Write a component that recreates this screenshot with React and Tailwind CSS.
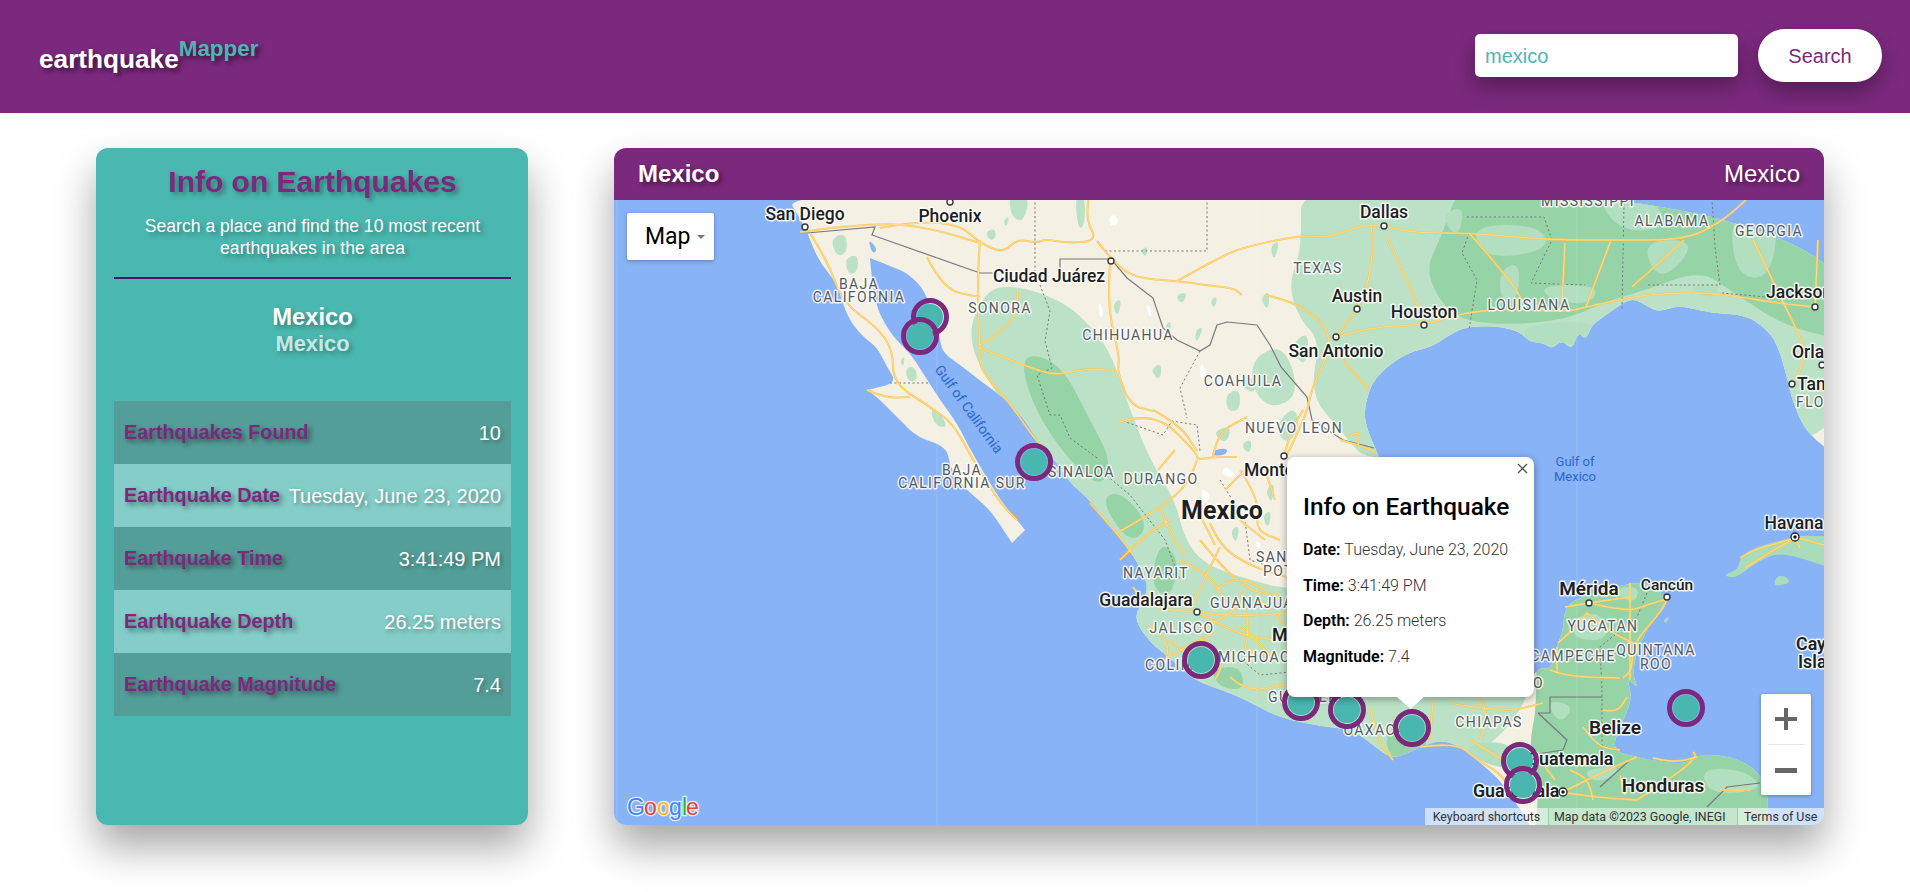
const LAND = "780,185 1860,185 1860,470 1808,437 1792,400 1787,377 1777,343 1765,328 1746,315 1710,313 1678,305 1660,312 1648,307 1632,297 1610,312 1596,322 1591,327 1586,340 1578,332 1572,350 1562,340 1552,349 1544,343 1530,342 1520,332 1503,327 1482,326 1462,328 1445,338 1431,347 1410,352 1389,365 1376,378 1369,390 1363,417 1374,447 1400,500 1420,560 1440,620 1480,660 1533,677 1540,667 1550,670 1556,650 1558,643 1563,630 1565,607 1580,597 1630,583 1647,583 1667,597 1665,608 1653,620 1643,637 1635,657 1633,677 1638,687 1632,683 1627,678 1632,697 1625,717 1610,750 1637,757 1650,760 1683,765 1697,755 1720,755 1740,760 1760,773 1770,800 1763,850 1540,850 1525,815 1513,800 1500,780 1477,760 1457,745 1440,740 1420,747 1393,760 1373,745 1353,730 1320,726 1290,720 1270,713 1250,702 1230,693 1193,680 1173,660 1150,643 1133,617 1145,600 1148,582 1133,555 1117,533 1090,500 1070,483 1057,463 1037,440 1027,423 1007,400 983,383 963,367 943,353 940,340 938,330 930,305 922,287 907,273 893,267 870,258 870,258 872,280 877,310 893,337 910,353 923,373 940,400 957,423 972,453 1000,500 1017,520 1025,530 1025,530 1012,543 1012,543 997,520 987,507 963,487 950,467 947,447 917,437 903,423 887,407 877,397 867,390 867,390 897,383 887,367 877,347 863,337 847,317 837,283 820,263 810,240 805,227";
const CUBA = "1723,575 1738,570 1740,558 1752,548 1790,538 1803,535 1850,538 1850,575 1802,558 1777,553 1757,562 1743,573 1733,578";

const LIGHT = [
  "1300,170 1302,250 1288,285 1300,320 1320,340 1310,395 1340,430 1374,470 1880,470 1880,170",
  "985,290 1015,285 1060,300 1085,320 1110,350 1130,410 1150,460 1175,500 1185,540 1205,565 1250,580 1290,590 1533,600 1533,720 1400,800 1100,730 1070,560 1060,480 1000,400 965,340",
  "1075,195 1085,195 1085,225 1078,230",
  "845,258 858,254 858,272 848,275",
  "830,240 845,232 848,250 838,258",
  "905,368 915,366 918,380 908,382",
  "930,408 940,412 948,428 935,426",
  "985,232 995,228 996,238 990,241",
  "1008,195 1030,195 1024,222 1012,218",
  "1175,295 1188,292 1182,305",
  "1195,330 1204,326 1196,345",
  "1255,355 1285,345 1300,395 1270,410 1250,385",
  "1225,395 1240,388 1240,410 1228,412",
  "1290,345 1310,330 1305,370",
  "1270,246 1280,240 1274,262",
  "1212,432 1232,425 1226,445",
  "1240,385 1255,375 1255,395",
  "1150,370 1162,362 1160,382",
  "1275,425 1295,405 1300,430 1285,445",
  "1290,280 1298,262 1302,290",
  "1260,298 1270,290 1268,312",
  "1112,305 1122,297 1118,318",
  "1165,325 1172,320 1168,340",
  "1140,250 1148,246 1146,258",
  "1210,300 1218,296 1214,310",
  "1240,445 1252,438 1250,455",
  "1265,490 1275,482 1272,505",
  "1230,530 1240,525 1236,545",
  "1195,500 1203,495 1200,512",
  "1110,438 1120,432 1116,448",
  "1262,515 1272,510 1268,530",
  "1003,220 1010,216 1006,228",
  "900,360 905,356 903,368",
];
const DARK = [
  "1465,170 1440,240 1425,270 1445,310 1480,325 1560,322 1610,300 1640,292 1700,270 1730,290 1790,330 1880,345 1880,170",
  "1534,575 1534,575 1720,575 1720,575 1720,850 1720,850 1532,850 1532,850 1540,790 1528,750 1538,700",
  "1640,750 1640,750 1790,750 1790,750 1790,850 1790,850 1640,850 1640,850",
  "1380,735 1420,715 1430,760 1400,770",
  "1020,352 1060,362 1090,420 1112,462 1100,490 1060,450 1030,400",
  "1100,500 1120,490 1150,525 1130,545",
  "1160,540 1180,560 1170,600 1150,585",
  "1300,650 1340,660 1330,700 1300,695",
  "1210,670 1240,665 1245,690 1220,688",
];
const DARKLIGHT = [
  "1595,195 1650,195 1670,228 1620,232",
  "1470,225 1540,225 1550,250 1485,260",
  "1730,210 1780,215 1770,280 1735,275",
  "1540,285 1600,285 1590,305 1550,300",
  "1640,240 1700,240 1660,285",
  "1700,768 1745,770 1765,790 1710,795",
  "1580,770 1625,765 1600,785",
  "1460,745 1510,740 1520,770 1485,765",
  "1570,620 1600,610 1610,640 1575,640",
  "1520,325 1600,320 1585,345 1530,345",
  "1440,215 1465,205 1458,240",
  "1500,270 1520,262 1518,300 1500,300",
  "1685,290 1715,280 1720,300",
  "1610,590 1640,585 1635,605",
  "1545,700 1575,705 1560,725",
];
const WHITE = ["1109,216 1117,215 1118,225 1110,226", "1098,300 1104,312 1100,320", "1145,302 1152,310 1150,320", "1096,268 1102,278 1094,282", "1200,487 1212,495 1204,505", "1224,465 1240,478 1222,476", "1255,540 1262,545 1258,550", "1200,360 1208,375 1200,380"];

const ROADS = [
  "880,228 920,221 960,225 980,243 1003,253 1017,239 1037,243 1045,239 1067,243 1097,241 1087,221 1088,200",
  "1097,241 1110,258 1133,278 1177,281 1213,286 1233,288 1242,295",
  "1177,281 1213,261 1240,248 1301,235 1327,238 1363,225 1384,226 1415,233 1472,233 1549,240 1616,240 1684,240 1720,223 1746,200",
  "1371,226 1374,247 1365,300 1336,337", "1387,237 1410,287 1425,325",
  "1336,337 1369,327 1425,325 1462,313 1513,308 1565,312 1586,307 1632,297 1668,293 1715,293 1777,303 1815,307",
  "1265,295 1299,302 1336,337 1312,387 1307,413 1286,457", "1343,360 1369,390",
  "1469,233 1508,277 1524,303", "1565,243 1562,303", "1611,240 1586,307", "1684,240 1632,287", "1753,240 1787,310 1808,353 1792,387", "1818,240 1815,307",
  "810,233 827,260 843,303 877,327 893,350 893,383 930,407 953,423 973,460 1000,503 1017,520", "867,390 885,398 910,397",
  "980,240 977,280 980,350 980,370 1010,403 1033,437 1050,455", "1090,503 1117,533 1133,555",
  "927,257 943,290 980,297", "800,232 875,222 930,228 980,243", "980,348 1037,371 1060,375 1087,368 1117,371",
  "1110,265 1107,305 1120,358 1117,371 1130,405 1153,411", "980,345 1015,325 1018,290",
  "1153,410 1180,425 1197,451", "1117,423 1153,410 1197,453 1197,460 1213,457 1237,457",
  "1197,460 1190,483 1160,508 1117,533", "1160,508 1170,533 1185,555", "1210,523 1220,547 1253,567 1287,577", "1220,547 1190,607 1197,612",
  "1197,612 1150,610 1133,587", "1197,612 1233,617 1287,613", "1197,612 1233,633 1273,640", "1167,657 1213,633", "1230,677 1247,693 1290,683",
  "1284,456 1290,433 1303,410", "1213,457 1217,433 1247,417", "1240,470 1260,500 1255,530 1280,540", "1340,440 1356,444 1375,452",
  "1350,436 1360,430 1358,445", "1200,540 1240,590 1280,595", "1210,625 1250,600", "1240,625 1275,660", "1170,640 1190,660 1230,660",
  "1370,707 1377,740 1393,760", "1433,700 1430,740", "1450,703 1503,713 1543,703", "1470,740 1503,760",
  "1420,747 1457,742 1477,760 1500,773 1513,793 1563,792 1593,797 1637,800", "1563,792 1607,770 1637,757", "1593,800 1590,780 1570,770",
  "1637,800 1673,777 1697,757 1693,752", "1653,758 1673,763 1697,757", "1583,727 1597,747 1620,750", "1603,710 1617,713 1627,697",
  "1565,607 1589,603 1630,597", "1589,603 1627,612 1647,605 1667,599", "1630,583 1630,680", "1667,599 1663,610 1633,643 1632,670 1623,678",
  "1587,613 1607,630 1633,643", "1550,670 1557,673 1580,677 1620,678", "1557,647 1557,673", "1558,643 1570,633 1587,613",
  "1740,558 1752,550 1790,540 1795,537 1824,545", "1745,568 1770,552 1792,540", "1795,537 1800,548",
  "1180,560 1210,575 1225,600", "1240,590 1250,620 1245,650", "1150,625 1170,640 1165,665", "1215,590 1235,575 1265,590", "1260,600 1285,625",
  "1205,640 1225,660 1215,680", "1250,650 1280,660", "1120,560 1145,535 1170,520", "1240,520 1265,540", "1225,490 1245,470", "1275,500 1265,470",
  "1200,515 1215,545", "1158,470 1175,450", "1330,690 1345,725", "1470,690 1490,705 1480,740", "1540,760 1555,780", "1620,775 1625,795", "1720,790 1750,790",
];
const STATES = [
  "1035,198 1035,271", "1040,285 1050,311 1045,341 1052,368 1037,375 1050,415 1060,415 1070,438 1097,458", "1105,251 1207,251 1207,198",
  "1200,351 1180,388 1187,418", "1123,421 1163,435 1172,421 1197,425 1200,451", "890,383 930,383",
  "1469,233 1462,253 1477,280 1469,330", "1467,217 1544,217 1552,240 1531,283 1585,285", "1624,203 1622,310", "1648,285 1720,285 1715,247 1712,200", "1722,293 1766,297",
  "1647,593 1637,617 1600,647 1602,690", "1602,690 1602,750", "1100,470 1130,495 1165,540 1180,580", "1220,480 1245,520 1250,560 1280,570", "1230,650 1260,675 1290,672",
];
const BORDERS = [
  "807,233 875,227 872,235 980,273 993,273",
  "1060,268 1060,259 1111,259 1127,278 1153,298 1163,328 1177,340 1200,351 1210,345 1217,325 1227,322 1257,325 1270,345 1281,367 1307,397 1312,420 1343,440 1374,448",
  "1538,713 1567,740 1563,750 1530,755", "1538,713 1550,713 1550,697 1602,697", "1600,787 1630,760", "1760,783 1727,787 1707,807",
];
const LAKES = ["1213,450 1228,448 1226,455 1212,456", "868,238 878,250 872,254", "1518,600 1525,598 1522,604", "1290,638 1298,638 1296,644"];

const LABELS = [
  ["San Diego", 805, 220, "c"], ["Phoenix", 950, 222, "c"], ["Ciudad Juárez", 1049, 282, "c"], ["Dallas", 1384, 218, "c"], ["Austin", 1357, 302, "c"],
  ["Houston", 1424, 318, "c"], ["San Antonio", 1336, 357, "c"], ["Jacksonville", 1766, 298, "cs"], ["Orlando", 1792, 358, "cs"], ["Tampa", 1797, 390, "cs"],
  ["Monterrey", 1244, 476, "cs"], ["Guadalajara", 1146, 606, "c"], ["Mexico City", 1272, 641, "bs"], ["Mérida", 1589, 595, "b"], ["Cancún", 1667, 590, "cm"],
  ["Havana", 1794, 529, "c"], ["Cayman", 1796, 650, "bs"], ["Islands", 1798, 668, "bs"], ["Belize", 1615, 734, "b"], ["Honduras", 1663, 792, "b"],
  ["Guatemala", 1527, 765, "bs"], ["Guatemala", 1473, 797, "bs"], ["Mexico", 1222, 519, "x"],
  ["BAJA", 859, 289, "s"], ["CALIFORNIA", 859, 302, "s"], ["SONORA", 1000, 313, "s"], ["CHIHUAHUA", 1128, 340, "s"], ["COAHUILA", 1243, 386, "s"],
  ["TEXAS", 1318, 273, "s"], ["LOUISIANA", 1529, 310, "s"], ["MISSISSIPPI", 1588, 206, "s"], ["ALABAMA", 1672, 226, "s"], ["GEORGIA", 1769, 236, "s"],
  ["FLORIDA", 1796, 407, "ss"], ["NUEVO LEON", 1294, 433, "s"], ["DURANGO", 1161, 484, "s"], ["SINALOA", 1048, 477, "ss"], ["NAYARIT", 1156, 578, "s"],
  ["JALISCO", 1182, 633, "s"], ["GUANAJUATO", 1210, 608, "ss"], ["SAN LUIS", 1256, 562, "ss"], ["POTOSI", 1263, 576, "ss"], ["MICHOACAN", 1218, 662, "ss"],
  ["COLIMA", 1145, 670, "ss"], ["GUERRERO", 1268, 702, "ss"], ["BAJA", 962, 475, "s"], ["CALIFORNIA SUR", 962, 488, "s"], ["CHIAPAS", 1489, 727, "s"],
  ["OAXACA", 1375, 735, "s"], ["YUCATAN", 1603, 631, "s"], ["CAMPECHE", 1573, 661, "s"], ["QUINTANA", 1656, 655, "s"], ["ROO", 1656, 669, "s"], ["TABASCO", 1544, 688, "se"],
];
const DOTS = [[805, 227], [950, 202], [1111, 261], [1384, 226], [1357, 309], [1424, 325], [1336, 337], [1815, 307], [1822, 365], [1792, 384], [1284, 456], [1197, 612], [1589, 603], [1667, 597]];
const CAPITALS = [[1795, 537], [1563, 792]];
const MARKERS = [[930, 317], [920, 336], [1034, 462], [1201, 660], [1301, 702], [1347, 710], [1412, 728], [1520, 761], [1523, 785], [1686, 708]];
const ROWS = [
  ["Earthquakes Found", "10", "bg-[#549e99]"],
  ["Earthquake Date", "Tuesday, June 23, 2020", "bg-[#84cdc8]"],
  ["Earthquake Time", "3:41:49 PM", "bg-[#549e99]"],
  ["Earthquake Depth", "26.25 meters", "bg-[#84cdc8]"],
  ["Earthquake Magnitude", "7.4", "bg-[#549e99]"],
];
const POPUP = [["Date:", "Tuesday, June 23, 2020"], ["Time:", "3:41:49 PM"], ["Depth:", "26.25 meters"], ["Magnitude:", "7.4"]];

const parse = (s) => s.trim().split(/\s+/).map((p) => p.split(",").map(Number));
const mid = (a, b) => `${(a[0] + b[0]) / 2},${(a[1] + b[1]) / 2}`;
function closed(s) {
  const p = parse(s);
  let d = `M${mid(p[p.length - 1], p[0])}`;
  p.forEach((q, i) => { d += `Q${q[0]},${q[1]} ${mid(q, p[(i + 1) % p.length])}`; });
  return d + "Z";
}
function open(s) {
  const p = parse(s);
  let d = `M${p[0][0]},${p[0][1]}`;
  for (let i = 1; i < p.length - 1; i++) d += `Q${p[i][0]},${p[i][1]} ${mid(p[i], p[i + 1])}`;
  const l = p[p.length - 1];
  return d + `L${l[0]},${l[1]}`;
}

function Label({ t, x, y, k }) {
  const c = k[0];
  const isCity = c === "c" || c === "b" || c === "x";
  const start = k === "cs" || k === "ss" || k === "bs";
  const end = k === "se";
  const size = c === "x" ? 25 : k === "bs" ? 17.8 : c === "b" ? 19 : k === "cm" ? 15.5 : isCity ? 17.5 : 14;
  const weight = c === "x" ? 700 : c === "b" ? 600 : isCity ? 500 : 400;
  return (
    <text x={x} y={y} textAnchor={start ? "start" : end ? "end" : "middle"} fontSize={size} fontWeight={weight} fill={isCity ? "#1d1f22" : "#55595f"} stroke="#ffffff" strokeOpacity="0.85" strokeWidth="3" letterSpacing={isCity ? 0 : 1.4} className="[paint-order:stroke]" strokeLinejoin="round">
      {t}
    </text>
  );
}

function MapArt() {
  return (
    <svg viewBox="614 200 1210 625" className="block w-full h-full font-['Roboto',sans-serif]">
      <defs>
        <clipPath id="land"><path d={closed(LAND)} /></clipPath>
      </defs>
      <rect x="614" y="200" width="1210" height="625" fill="#89b3f7" />
      <path d={closed(LAND)} fill="#f5f0e4" />
      <g clipPath="url(#land)">
        {LIGHT.map((p, i) => <path key={i} d={closed(p)} fill="#bbe2c6" />)}
        {DARK.map((p, i) => <path key={i} d={closed(p)} fill="#96d3a7" />)}
        {DARKLIGHT.map((p, i) => <path key={i} d={closed(p)} fill="#b2dfbf" />)}
        {WHITE.map((p, i) => <path key={i} d={closed(p)} fill="#ffffff" />)}
      </g>
      <path d={closed(CUBA)} fill="#a9dcb8" />
      <path d={closed("1777,575 1787,577 1790,583 1773,587")} fill="#a9dcb8" />
      <path d={closed("1663,620 1670,616 1666,624")} fill="#a9dcb8" />
      {LAKES.map((p, i) => <path key={i} d={closed(p)} fill="#89b3f7" />)}
      {STATES.map((p, i) => <polyline key={i} points={p} fill="none" stroke="#74777c" strokeWidth="1" strokeDasharray="2 2.5" />)}
      {BORDERS.map((p, i) => <polyline key={i} points={p} fill="none" stroke="#77797d" strokeWidth="1.2" />)}
      {ROADS.map((p, i) => <path key={i} d={open(p)} fill="none" stroke="#fcc654" strokeWidth="2.1" />)}
      {ROADS.map((p, i) => <path key={i} d={open(p)} fill="none" stroke="#fff0c2" strokeWidth="0.5" />)}
      {[617, 937, 1257, 1577].map((x) => <line key={x} x1={x} x2={x} y1="200" y2="825" stroke="#ffffff" strokeOpacity="0.16" />)}
      {LABELS.map(([t, x, y, k], i) => <Label key={i} t={t} x={x} y={y} k={k} />)}
      <text x="969" y="414" textAnchor="middle" fontSize="14" fill="#2c67c9" transform="rotate(54 969 409)">Gulf of California</text>
      <text x="1575" y="466" textAnchor="middle" fontSize="13" fill="#2c67c9">Gulf of</text>
      <text x="1575" y="481" textAnchor="middle" fontSize="13" fill="#2c67c9">Mexico</text>
      {DOTS.map(([x, y], i) => <circle key={i} cx={x} cy={y} r="3" fill="#ffffff" stroke="#34373b" strokeWidth="1.4" />)}
      {CAPITALS.map(([x, y], i) => (
        <g key={i}><circle cx={x} cy={y} r="4" fill="#ffffff" stroke="#222" strokeWidth="1.3" /><circle cx={x} cy={y} r="1.7" fill="#111" /></g>
      ))}
      {MARKERS.map(([x, y], i) => (
        <g key={i}><circle cx={x} cy={y} r="13" fill="#4ab8b0" /><circle cx={x} cy={y} r="16.5" fill="#4ab8b0" fillOpacity="0.22" stroke="#7b287d" strokeWidth="5" /></g>
      ))}
      <g fontSize="23" fontFamily="'Liberation Sans', sans-serif" stroke="#ffffff" strokeWidth="2.5" className="[paint-order:stroke]" strokeOpacity="0.8">
        <text x="627" y="815" fill="#4285f4">G</text>
        <text x="644" y="815" fill="#ea4335">o</text>
        <text x="657" y="815" fill="#fbbc05">o</text>
        <text x="669" y="815" fill="#4285f4">g</text>
        <text x="682" y="815" fill="#34a853">l</text>
        <text x="686" y="815" fill="#ea4335">e</text>
      </g>
    </svg>
  );
}

export default function App() {
  return (
    <div className="min-h-[892px] bg-white font-['Liberation_Sans',Arial,sans-serif]">
      <header className="h-[113px] bg-[#7b297d] flex items-center justify-between pl-[39px] pr-[28px] shadow-[0_4px_20px_rgba(0,0,0,0.03)]">
        <div className="flex items-start font-bold -mt-[1px] [text-shadow:3px_3px_5px_rgba(0,0,0,0.55)]">
          <span className="text-white text-[26.2px] leading-[30px] mt-[6px]">earthquake</span>
          <span className="text-[#4ab8b0] text-[22.4px] leading-[26px] -mt-[2px]">Mapper</span>
        </div>
        <div className="flex items-center gap-[20px] -mt-[2px]">
          <div className="w-[263px] h-[43px] bg-white rounded-[5px] flex items-center pl-[10px] text-[20px] text-[#4ab8b0] shadow-[0_10px_20px_rgba(0,0,0,0.3)]">mexico</div>
          <button className="w-[124px] h-[53px] bg-white rounded-full text-[20px] text-[#7b297d] shadow-[0_10px_20px_rgba(0,0,0,0.3)]">Search</button>
        </div>
      </header>
      <main className="flex gap-[86px] pl-[96px] pr-[86px] pt-[35px]">
        <aside className="w-[432px] h-[677px] shrink-0 rounded-[12px] bg-[#4ab8b0] pl-[18px] pr-[17px] shadow-[0_22px_40px_rgba(0,0,0,0.35)]">
          <h1 className="text-center text-[#7b297d] text-[30px] leading-[36px] font-bold pt-[16px] [text-shadow:3px_3px_5px_rgba(0,0,0,0.35)]">Info on Earthquakes</h1>
          <p className="text-center text-white text-[17.6px] leading-[21.5px] mt-[16px] px-[8px] [text-shadow:3px_3px_5px_rgba(0,0,0,0.35)]">Search a place and find the 10 most recent earthquakes in the area</p>
          <div className="h-[2px] bg-[#5a0f66] mt-[18px]" />
          <div className="text-center font-bold mt-[24px] [text-shadow:3px_3px_5px_rgba(0,0,0,0.3)]">
            <div className="text-white text-[23.8px] leading-[28px]">Mexico</div>
            <div className="text-[#c5e8e5] text-[21.9px] leading-[26px]">Mexico</div>
          </div>
          <div className="mt-[44px]">
            {ROWS.map(([label, value, bg]) => (
              <div key={label} className={`h-[63px] flex items-center justify-between pl-[10px] pr-[10px] ${bg}`}>
                <span className="text-[#7b297d] font-bold text-[19.8px] whitespace-nowrap [text-shadow:3px_3px_5px_rgba(0,0,0,0.45)]">{label}</span>
                <span className="text-white text-[20px] whitespace-nowrap [text-shadow:2px_2px_4px_rgba(0,0,0,0.35)]">{value}</span>
              </div>
            ))}
          </div>
        </aside>
        <section className="w-[1210px] h-[677px] shrink-0 rounded-[12px] overflow-hidden flex flex-col shadow-[0_22px_40px_rgba(0,0,0,0.35)]">
          <div className="h-[52px] bg-[#7b297d] flex items-center justify-between pl-[24px] pr-[24px] text-white text-[24px] [text-shadow:3px_3px_5px_rgba(0,0,0,0.45)]">
            <span className="font-bold">Mexico</span>
            <span>Mexico</span>
          </div>
          <div className="relative h-[625px] overflow-hidden font-['Roboto',sans-serif]">
            <MapArt />
            <div className="absolute left-[13px] top-[13px] w-[87px] h-[47px] bg-white rounded-[2px] flex items-center pl-[18px] gap-[6px] text-[23px] leading-[49px] text-black shadow-[0_1px_4px_rgba(0,0,0,0.3)]">
              <span>Map</span>
              <span className="w-0 h-0 border-x-[4px] border-x-transparent border-t-[4px] border-t-[#777]" />
            </div>
            <div className="absolute left-[1147px] top-[494px] w-[50px] h-[101px] bg-white rounded-[2px] flex flex-col items-center shadow-[0_1px_4px_rgba(0,0,0,0.3)]">
              <div className="h-[50px] flex items-center justify-center">
                <svg width="24" height="24" viewBox="0 0 24 24"><path d="M10 1h4v9h9v4h-9v9h-4v-9H1v-4h9z" fill="#666" /></svg>
              </div>
              <div className="w-[37px] h-px bg-[#e6e6e6]" />
              <div className="h-[50px] flex items-center justify-center">
                <svg width="24" height="24" viewBox="0 0 24 24"><rect x="1" y="10" width="22" height="5" fill="#666" /></svg>
              </div>
            </div>
            <div className="absolute left-[811px] bottom-0 h-[17px] w-[399px] flex text-[12.4px] text-[#333] leading-[17px]">
              <span className="w-[123px] bg-white/60 text-center whitespace-nowrap">Keyboard shortcuts</span>
              <span className="w-[188px] ml-px bg-white/45 pl-[5px] whitespace-nowrap">Map data ©2023 Google, INEGI</span>
              <span className="w-[86px] ml-px bg-white/60 pl-[6px] whitespace-nowrap">Terms of Use</span>
            </div>
            <div className="absolute left-[673px] top-[257px] w-[247px] h-[240px] bg-white rounded-[8px] pl-[16px] text-black shadow-[0_2px_7px_1px_rgba(0,0,0,0.3)]">
              <svg className="absolute right-[6px] top-[6px]" width="11" height="11" viewBox="0 0 11 11"><path d="M1 1l9 9M10 1l-9 9" stroke="#555" strokeWidth="1.3" fill="none" /></svg>
              <div className="text-[24.4px] leading-[30px] font-medium pt-[35px] whitespace-nowrap">Info on Earthquake</div>
              <div className="mt-[18px] flex flex-col gap-[15.5px] text-[16px] leading-[20px]">
                {POPUP.map(([k, v]) => (
                  <div key={k} className="whitespace-nowrap"><span className="font-semibold">{k}</span> <span className="font-light text-[#333]">{v}</span></div>
                ))}
              </div>
              <div className="absolute left-[110px] -bottom-[12px] w-[27px] h-[12px] bg-white [clip-path:polygon(0_0,100%_0,50%_100%)]" />
            </div>
          </div>
        </section>
      </main>
    </div>
  );
}
